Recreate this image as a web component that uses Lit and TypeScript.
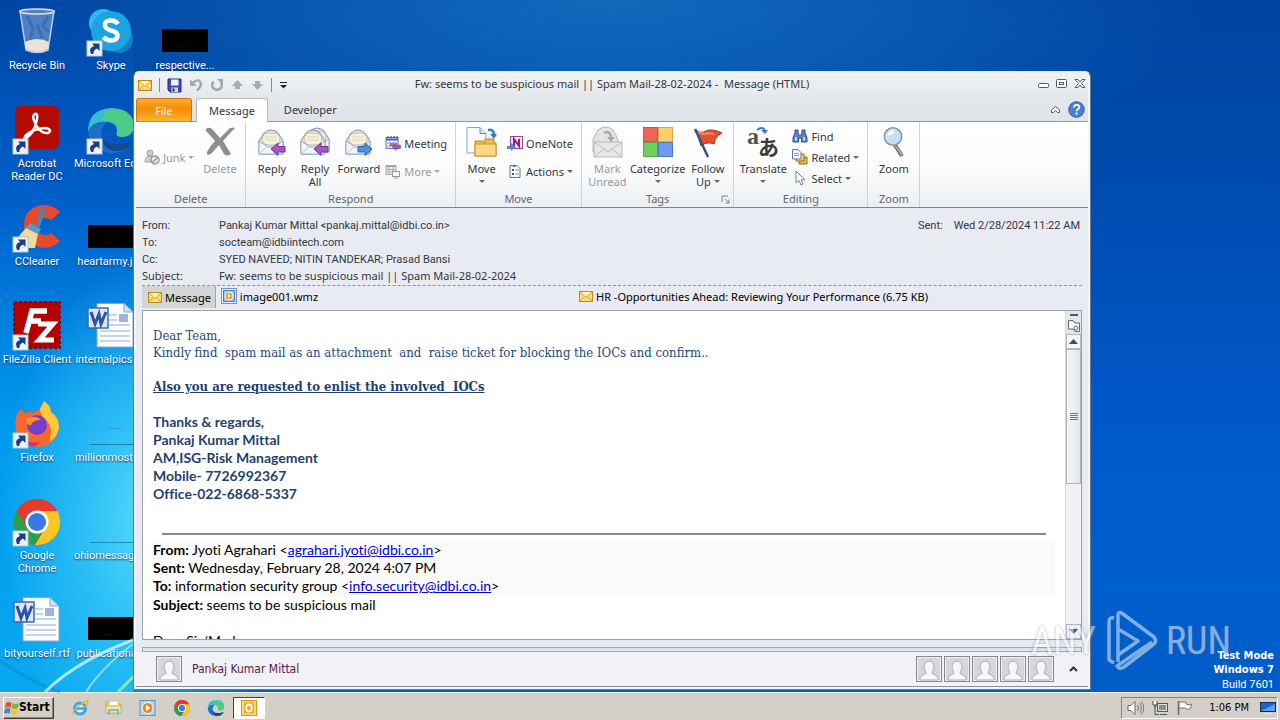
import { LitElement, html, svg, css, nothing, type TemplateResult } from "lit";
import { customElement } from "lit/decorators.js";

type Drawing = TemplateResult;

const box = (w: number, h: number, body: unknown, cls = "", vb = `0 0 ${w} ${h}`): Drawing =>
  html`<svg class=${cls} width=${w} height=${h} viewBox=${vb} aria-hidden="true">${body}</svg>`;

/* ---------- shared icon parts ---------- */

const mailOpen = (x = 0, y = 0) => svg`<g transform="translate(${x} ${y})">
  <path d="M1 12 6 4Q13-2 20 4L25 12V25H1Z" fill="#dfe8f2" stroke="#7b8fa8"/>
  <rect x="4" y="4" width="18" height="12" rx="6" fill="#f6f1dc" stroke="#c4bb9c"/>
  <path d="M7 8h12M7 11h12" stroke="#ddd4b4"/>
  <path d="M1 12 10 18H16L25 12V25H1Z" fill="#f1f6fb" stroke="#9aabc0"/>
  <path d="M1 25 10 17M25 25 16 17" stroke="#b6c4d3" fill="none"/></g>`;
const arrowLeft = (x: number, y: number, s = 1) =>
  svg`<path transform="translate(${x} ${y}) scale(${s})" d="M0 6 7 0V3.500H14V9H7V12.500Z" fill="#a556c4" stroke="#7c3199"/>`;
const arrowRight = (x: number, y: number) =>
  svg`<path transform="translate(${x} ${y})" d="M14 6 7 0V3.500H0V9H7V12.500Z" fill="#4f90dd" stroke="#2a62ac"/>`;

const icon = {
  mail: () => box(14, 12, svg`<rect x=".5" y="1.500" width="13" height="10" fill="#fbdf72" stroke="#b98a1d"/>
    <path d="M1 2 7 7.500 13 2M1 11 5.500 6.500M13 11 8.500 6.500" fill="none" stroke="#d3a436"/>
    <path d="M2 2H12L7 6.500Z" fill="#fff6c8"/>`),
  save: () => box(15, 15, svg`<path d="M1 1H14V14H3L1 12Z" fill="#3f49b4" stroke="#252c80"/>
    <rect x="4" y="1.500" width="7.500" height="6" fill="#f1f4ff"/><rect x="4.500" y="9.500" width="6.500" height="4.500" fill="#d5daf4"/>
    <rect x="5.500" y="10.500" width="2" height="3" fill="#252c80"/>`),
  undo: () => box(14, 14, svg`<path d="M4 5Q9 0 11.500 4.500 13 8 8 12.500" fill="none" stroke="#a3a7ac" stroke-width="2.500"/><path d="M1 1.500V8H8Z" fill="#a3a7ac"/>`),
  redo: () => box(14, 14, svg`<path d="M3.500 3.500Q1 6.500 3 10 7 13.500 11 10 12.500 7 11 3" fill="none" stroke="#a3a7ac" stroke-width="2.500"/><path d="M7 1H13V7Z" fill="#a3a7ac"/>`),
  up: () => box(13, 12, svg`<path d="M6.500 1 12 7H9V10H4V7H1Z" fill="#a9adb2"/>`),
  down: () => box(13, 12, svg`<path d="M6.500 11 12 5H9V2H4V5H1Z" fill="#a9adb2"/>`),
  customize: () => box(9, 8, svg`<path d="M1 1.500H8" stroke="#222"/><path d="M1 4H8L4.500 7.500Z" fill="#222"/>`),
  minimize: () => box(12, 12, svg`<rect x=".5" y="5.500" width="10" height="4" rx="1" fill="#fff" stroke="#555b63"/>`),
  restore: () => box(12, 12, svg`<rect x=".5" y="1.500" width="10" height="8" rx="1" fill="#fff" stroke="#555b63"/><rect x="3.500" y="4.500" width="4" height="2" fill="none" stroke="#555b63"/>`),
  close: () => box(12, 12, svg`<path d="M1 1.500H4L6 4 8 1.500H11L7.500 5.500 11 9.500H8L6 7 4 9.500H1L4.500 5.500Z" fill="#fff" stroke="#555b63"/>`),
  collapse: () => box(11, 9, svg`<path d="M1.500 5 5.500 1.500 9.500 5V7.500H7.500L5.500 5.500 3.500 7.500H1.500Z" fill="#fff" stroke="#555b63"/>`),
  help: () => box(17, 17, svg`<circle cx="8.500" cy="8.500" r="7.800" fill="#4a7fc9" stroke="#3364a8"/>
    <path d="M5.800 6.500Q6 3.800 8.700 3.800T11.300 6.200Q11.200 7.600 9.600 8.400 8.600 9 8.600 10.200" fill="none" stroke="#fff" stroke-width="1.800"/><circle cx="8.600" cy="12.600" r="1.200" fill="#fff"/>`),
  junk: () => box(16, 16, svg`<circle cx="6" cy="4" r="3" fill="#c9c9c9" stroke="#a0a0a0"/>
    <path d="M1 13Q1 7 6 7T11 13Z" fill="#cfcfcf" stroke="#a0a0a0"/><circle cx="11" cy="11" r="4" fill="#e6e6e6" stroke="#969696" stroke-width="1.500"/><path d="M8 14 14 8" stroke="#969696" stroke-width="1.500"/>`),
  remove: () => box(32, 32, svg`<path d="M2 3Q6 0 9 4L16 12 26 2Q30 1 31 2 24 9 19 15L27 28Q22 31 20 28L15 19 7 28Q2 30 3 26 6 20 11 15L4 7Q1 5 2 3Z" fill="#8e8e8e"/>`),
  reply: () => box(32, 32, svg`${mailOpen(2, 3)}${arrowLeft(15, 17)}`),
  replyAll: () => box(32, 32, svg`${mailOpen(5, 1)}${mailOpen(1, 3)}${arrowLeft(15, 17)}`),
  forward: () => box(32, 32, svg`${mailOpen(2, 3)}${arrowRight(15, 17)}`),
  meeting: () => box(16, 16, svg`<rect x="1" y="2.500" width="12" height="11" fill="#fff" stroke="#5b74b8"/><path d="M1 4.500H13" stroke="#4059ac" stroke-width="2"/>
    <path d="M3 1V3M6 1V3M9 1V3M12 1V3" stroke="#27366e"/><path d="M1 8H13M1 11H13M5 6V13M9 6V13" stroke="#8ba0d6"/><rect x="5" y="8" width="4" height="3" fill="#e15b52"/>${arrowLeft(7, 8, 0.6)}`),
  more: () => box(16, 16, svg`<rect x="1" y="2.500" width="10" height="9" fill="#eee" stroke="#aaa"/><path d="M1 3.500H11M1 6.500H11M1 9H11M4 3V11M8 3V11" stroke="#aaa"/><rect x="7.500" y="8.500" width="7" height="5" fill="#f4f4f4" stroke="#999"/><path d="M9 16 12 13.500V16" stroke="#999" fill="none"/>`),
  move: () => box(32, 32, svg`<path d="M1 1.500H14L20 7.500V27H1Z" fill="#f8fbff" stroke="#8da3c0"/><path d="M14 1.500V7.500H20" fill="#dce6f3" stroke="#6b83a5"/>
    <path d="M22 4Q28 3 28 9" fill="none" stroke="#3c78d0" stroke-width="2.500"/><path d="M24 8H31L28 13Z" fill="#3c78d0"/>
    <path d="M9 15H17L19 17V13H28V17H30V30H9Z" fill="#f2bd50" stroke="#b98529"/><path d="M9 18H30V30H9Z" fill="#fbd980" stroke="#c8943a"/>`),
  oneNote: () => box(16, 16, svg`<rect x="3.500" y="1.500" width="12" height="12" fill="#f6e6f4" stroke="#a04595"/><path d="M7 11V4L12 11V4" fill="none" stroke="#8b2380" stroke-width="2"/><path d="M0 11H4V8L9 12 4 16V14H0Z" fill="#4f87d6"/>`),
  actions: () => box(16, 16, svg`<path d="M3 2.500H10L13 5.500V14.500H3Z" fill="#f5f8fc" stroke="#63788f"/><rect x="5" y="6" width="2" height="2" fill="#44597a"/><rect x="5" y="10" width="2" height="2" fill="#44597a"/><path d="M8.500 7H11.500M8.500 11H11.500M6 3.500H9" stroke="#7488a6"/>`),
  unread: () => box(32, 32, svg`<path d="M2 13 7 4Q15-2 22 4L27 13V26H2Z" fill="#e4e2e3" stroke="#b9b5b7"/><path d="M13 7Q19 4 20 11" fill="none" stroke="#a9a9a9" stroke-width="2.500"/><path d="M16 11H24L20 16Z" fill="#a9a9a9"/>
    <path d="M3 16H31V31H3Z" fill="#e9e7e8" stroke="#b9b5b7"/><path d="M3 16 17 26 31 16M3 31 13 23M31 31 21 23" fill="none" stroke="#bbb"/>`),
  categorize: () => box(32, 32, svg`<rect x="1.500" y="1.500" width="14" height="14" fill="#f0635c" stroke="#d54f48"/><rect x="16.500" y="1.500" width="14" height="14" fill="#fbd06b" stroke="#dba93f"/>
    <rect x="1.500" y="16.500" width="14" height="14" fill="#6fcf5d" stroke="#4fae45"/><rect x="16.500" y="16.500" width="14" height="14" fill="#6d9bea" stroke="#4c78cc"/>`),
  flag: () => box(32, 32, svg`<path d="M4 4Q9 8 14 5T30 7Q23 10 22 18 15 15 9 20Z" fill="#e5502f" stroke="#a93316"/><path d="M6 6Q12 9 16 7L22 8" stroke="#f58f6c" fill="none" stroke-width="2"/><path d="M3 3 16 31" stroke="#35557e" stroke-width="2.500"/>`),
  translate: () => box(32, 32, svg`<text x="0" y="18" font-family="Liberation Serif" font-weight="700" font-size="24" fill="#4f4f4f">a</text>
    <text x="11" y="29" font-family="Noto Sans CJK JP" font-weight="700" font-size="21" fill="#3b3b3b">あ</text>
    <path d="M10 4Q15 0 18 4" fill="none" stroke="#3c78d0" stroke-width="2"/><path d="M14 4H21L18 8Z" fill="#3c78d0"/>`),
  find: () => box(16, 16, svg`<path d="M3 2H6V5L7.500 8H8.500L10 5V2H13V5L15 10V14H9.500V10H6.500V14H1V10L3 5Z" fill="#5e86c8" stroke="#24468a"/><path d="M3 11H5M11 11H13" stroke="#d4e3fa" stroke-width="3"/>`),
  related: () => box(16, 16, svg`<path d="M7 8H15V15H7Z" fill="#f4b83f" stroke="#9a6a12"/><path d="M4 5H12V12H4Z" fill="#fbd578" stroke="#9a6a12"/><path d="M.500 .5H6L9 3.500V10H.500Z" fill="#f3f7fd" stroke="#5d78a4"/><path d="M2 4.500H7M2 6.500H7" stroke="#8ba2c8"/>`),
  select: () => box(16, 16, svg`<path d="M4 1V13L7 10.500 9 15 11 14 9 9.800H13Z" fill="#fff" stroke="#6b7f9d"/>`),
  zoom: () => box(32, 32, svg`<path d="M17 19 24 30" stroke="#6b6b6b" stroke-width="4"/><path d="M17 19 24 29" stroke="#b5b5b5" stroke-width="1.500"/><circle cx="15" cy="10.500" r="8.700" fill="#c5dff7" stroke="#8394a8" stroke-width="1.500"/><path d="M9 10Q10 4 16 4 18 8 9 10Z" fill="#f3faff"/>`),
  media: () => box(16, 16, svg`<rect x=".5" y=".5" width="15" height="15" fill="#eaf2fb" stroke="#6b95c9"/><rect x="2.500" y="2.500" width="11" height="11" fill="#9bc2ea" stroke="#4a7dba"/><circle cx="8" cy="8" r="4" fill="#f49a34" stroke="#fff"/><path d="M7 6 10 8 7 10Z" fill="#fff"/>`),
  launcher: () => box(9, 9, svg`<path d="M1 7V1H7M4 4 8 8M8 4.500V8H4.500" fill="none" stroke="#7c838c"/>`),
  person: () => box(26, 26, svg`<rect x=".5" y=".5" width="25" height="25" fill="#d5d6d9" stroke="#84878c"/><rect x="1.500" y="1.500" width="23" height="23" fill="none" stroke="#eff0f1"/>
    <path d="M4 24Q3 20 10 17.500 10 16 9 14.500 7 10 9 7 13 3 17 7 19 10 17 14.500 16 16 16 17.500 23 20 22 24Z" fill="#f7f7f8" stroke="#aeb0b4"/>`),
};

const shortcut = svg`<rect x="0" y="33" width="15" height="15" fill="#eef3f8" stroke="#b9c6d3"/><path d="M4 46Q1 40 7 38L5 35.500H12.500V43L10 40.500Q6 42 6.500 46Z" fill="#173f86"/>`;
const tile = (body: unknown, linked = true) => box(48, 48, svg`${body}${linked ? shortcut : nothing}`, "pic");

const wordDoc = tile(svg`<path d="M10 1.500H37L46 10V45H10Z" fill="#fbfdff" stroke="#8aa3cf"/><path d="M37 1.500V10H46Z" fill="#d4e0f3" stroke="#8aa3cf"/>
  <path d="M22 13H30M22 18H30M22 23H43M13 29H43M13 34H43M13 39H43" stroke="#8fa9d8"/><rect x="32" y="12" width="9" height="8" fill="#9db4de"/>
  <rect x="1" y="6" width="20" height="20" fill="#dce7f8" stroke="#4265b0" stroke-width="1.500"/><path d="M4 10 8 22 12 12 14 22 19 10" fill="none" stroke="#2d51a3" stroke-width="3"/>`, false);
const blackBox = tile(svg`<rect x="1" y="21" width="46" height="23" fill="#000"/><path d="M16 38.500H24" stroke="#2a0606"/>`, false);
const faintLine = tile(svg`<path d="M3 44.500H48" stroke="#1d7fa6"/><path d="M21 28.500H34" stroke="#2da2c9"/>`, false);
const edgePaths = svg`<path d="M1 26Q1 3 25 2 46 3 47 20 46 31 34 31 28 30 30 26 31 18 22 16 6 16 1 26Z" fill="#34bfd0"/>
  <path d="M20 4Q44 0 47 20 46 31 34 31 28 30 30 26 31 14 14 14Z" fill="#55d06e" opacity=".75"/>
  <path d="M1 26Q5 14 20 16 13 22 15 31 19 41 30 42 40 42 45 36 39 48 24 47 4 45 1 26Z" fill="#1d6fc4"/>
  <path d="M15 29Q16 38 28 38 38 39 44 35 46 35 44 38 38 46 27 45 14 42 15 29Z" fill="#134a94"/>`;
const chromePaths = svg`<circle cx="24" cy="24" r="23" fill="#e33b2e"/><path d="M4 12.500A23 23 0 0 0 22 47L32 29 14 29Z" fill="#2c9f4b"/><path d="M44 12.500A23 23 0 0 1 22 47L33 29 24 13Z" fill="#fbc624"/><path d="M4 12.500 14 29 24 13H44A23 23 0 0 0 4 12.500Z" fill="#e33b2e"/>
  <circle cx="24" cy="24" r="11.500" fill="#fff"/><circle cx="24" cy="24" r="9" fill="#3b78e7"/>`;

const shortcuts: { name: string; art: Drawing }[] = [
  { name: "Recycle Bin", art: tile(svg`<path d="M7 3 13 42Q24 47 35 42L41 3Z" fill="#7fa6d6" fill-opacity=".6" stroke="#b9cde8" stroke-width="1.500"/><path d="M12 34Q24 28 36 34L35 41Q24 47 13 41Z" fill="#e9e2d6"/>
    <path d="M14 8 20 20 17 32M35 8 30 18 36 24M24 16 29 30" fill="none" stroke="#2f5ea8" stroke-width="3" opacity=".55"/><ellipse cx="24" cy="3.500" rx="17" ry="2.500" fill="#5b7fb3" stroke="#d6dde8" stroke-width="1.500"/>`, false) },
  { name: "Acrobat Reader DC", art: tile(svg`<rect x="2" y="0" width="44" height="43" rx="6" fill="#b30b00"/><path d="M11 33Q21 29 24 13 25 7 22 8 18 10 23 19 28 28 35 27 40 24 33 22 22 22 13 29 10 33 13 33" fill="none" stroke="#fff" stroke-width="2.500"/>`) },
  { name: "CCleaner", art: tile(svg`<path d="M47 8Q40 0 29 1 11 4 11 22 12 41 30 44 41 44 47 37L38 29Q33 33 28 30 23 26 25 19 30 11 38 16Z" fill="#e6492d"/><path d="M30 4 25 23" stroke="#3b8cc4" stroke-width="4"/><path d="M17 19 28 25 25 30 13 24Z" fill="#4c9fd0"/><path d="M13 24 25 30 22 44H3Q-1 39 13 24Z" fill="#f3d8a0"/>`) },
  { name: "FileZilla Client", art: tile(svg`<rect x="1" y="0" width="46" height="46" fill="#b50000" stroke="#8b0000" stroke-width="2" stroke-dasharray="3 2"/><path d="M13 31 19 9H34M17 19H28" fill="none" stroke="#fff" stroke-width="5.500"/><path d="M25 22H40L26 38H41" fill="none" stroke="#fff" stroke-width="5"/>`) },
  { name: "Firefox", art: tile(svg`<path d="M2 22Q3 12 9 9L12 14Q16 10 20 13L27 9 31 1Q38 6 38 12 46 17 46 28 43 46 24 47 3 45 2 22Z" fill="#f9662f"/><path d="M31 1Q38 6 38 12 46 17 46 28 44 38 36 42 41 28 33 20 27 15 27 9Z" fill="#fdc83c"/><path d="M5 33Q12 45 27 42 22 50 11 43Z" fill="#e3286a"/><circle cx="24" cy="25" r="10" fill="#7340c9"/><path d="M13 19Q22 14 28 20 20 20 18 25 13 26 13 19Z" fill="#ff8b33"/>`) },
  { name: "Google Chrome", art: tile(chromePaths) },
  { name: "bityourself.rtf", art: wordDoc },
  { name: "Skype", art: tile(svg`<circle cx="16" cy="15" r="14" fill="#32b8ee"/><circle cx="32" cy="31" r="14" fill="#1480c8"/><circle cx="24" cy="23" r="20" fill="#1ba3e2"/><path d="M31 16Q28 12 23 12.500 17 13 18 17.500 18.500 21 24 22.500 31 24 30.500 28.500 29 33 23 32.500 19 32 16.500 29" fill="none" stroke="#fff" stroke-width="4.500"/>`) },
  { name: "Microsoft Edge", art: tile(edgePaths) },
  { name: "heartarmy.jpg", art: blackBox },
  { name: "internalpics.rtf", art: wordDoc },
  { name: "millionmost.rtf", art: faintLine },
  { name: "ohiomessage.rtf", art: tile(svg`<path d="M3 44.500H48" stroke="#1d8fb6"/>`, false) },
  { name: "publicationa...", art: blackBox },
  { name: "respective...", art: blackBox },
];

const caret = html`<i class="caret"></i>`;
const big = (art: Drawing, label: string, o: { off?: boolean; drop?: boolean; second?: string; w?: string } = {}) =>
  html`<button class="big ${o.w ?? ""}" ?disabled=${o.off ?? false}>${art}<span>${label}</span>
    ${o.second || o.drop ? html`<span class="second">${o.second ?? nothing}${o.drop ? caret : nothing}</span>` : nothing}</button>`;
const small = (art: Drawing, label: string, o: { off?: boolean; drop?: boolean } = {}) =>
  html`<button class="small" ?disabled=${o.off ?? false}>${art}<span>${label}</span>${o.drop ? caret : nothing}</button>`;
const group = (name: string, body: unknown, corner: unknown = nothing) =>
  html`<section class="group"><div class="tools">${body}</div><footer><span>${name}</span>${corner}</footer></section>`;

const taskIcons = {
  start: box(15, 16, svg`<path d="M2 3Q5 1 7.500 3L6.500 8Q4 6 1 8Z" fill="#e5532d"/><path d="M8.500 3Q11 5 15 3L14 8Q10 10 7.500 8Z" fill="#7cb93c"/><path d="M1 9Q4 7 6.500 9L5.500 14Q3 12 0 14Z" fill="#3f86d8"/><path d="M7.500 9.500Q10 11 14 9L13 14Q9 16 6.500 14Z" fill="#f7c12e"/>`),
  ie: box(18, 18, svg`<circle cx="9" cy="9.500" r="5.500" fill="#d9f1fd" stroke="#3ba7e4" stroke-width="3"/><path d="M5 9.500H14" stroke="#3ba7e4" stroke-width="2.500"/><path d="M2 16Q0 12 9 6T17 2Q17 5 14 8" fill="none" stroke="#e8b92f" stroke-width="1.500"/>`),
  files: box(18, 18, svg`<path d="M1 3H7L9 5H16V14H1Z" fill="#f4d679" stroke="#cba544"/><rect x="4" y="2" width="9" height="5" fill="#fff" stroke="#b9c9a0"/><path d="M1 7H16V14H1Z" fill="#fbe79f" stroke="#d6b455"/><path d="M4 16V11H13V16" fill="none" stroke="#7bb7e3" stroke-width="2"/>`),
  player: box(18, 18, svg`<rect x="1" y="1.500" width="15" height="15" fill="#b5d5f3" stroke="#5a93cf"/><circle cx="8.500" cy="9" r="5.500" fill="#f58321" stroke="#fff"/><path d="M7 6 11.500 9 7 12Z" fill="#fff"/>`),
  chrome: box(18, 18, chromePaths, "", "-2 -2 52 52"),
  edge: box(18, 18, edgePaths, "", "-1 -1 50 50"),
  outlook: box(18, 18, svg`<rect x="1.500" y="1.500" width="15" height="15" fill="#fbd978" stroke="#d69a1f"/><rect x="4" y="3.500" width="10" height="11" fill="#f0aa1c"/><ellipse cx="9" cy="9" rx="2.800" ry="3.500" fill="none" stroke="#fff" stroke-width="1.800"/>`),
  sound: box(18, 16, svg`<path d="M1 5.500H4L8 1.500V14.500L4 10.500H1Z" fill="#fff" stroke="#666"/><path d="M10.500 5Q12.500 8 10.500 11M12.500 3Q16 8 12.500 13M14.500 1.500Q19 8 14.500 14.500" fill="none" stroke="#777"/>`),
  network: box(17, 16, svg`<rect x="5.500" y="3.500" width="10" height="8" fill="#e2e2e2" stroke="#555"/><rect x="7" y="5" width="7" height="5" fill="#8b8b8b"/><path d="M8 14.500H15M3 6V14.500H7" stroke="#555" fill="none"/><path d="M1 1V5H5V1M3 5V8" stroke="#444" fill="#fff"/>`),
  flag: box(18, 16, svg`<path d="M2.500 1V15" stroke="#666" stroke-width="1.500"/><path d="M3 2H10V4Q13 6 16 4L14 9Q11 10 9 8H3Z" fill="#fff" stroke="#777"/>`),
  desktop: box(16, 14, svg`<rect x=".5" y="1.500" width="15" height="9" fill="#1f63c8" stroke="#0d2c66"/><path d="M1 10 15 3V10Z" fill="#5ba0ee"/><path d="M4 12.500H12" stroke="#dbe6f2"/>`),
};

@customElement("app-root")
export class AppRoot extends LitElement {
  static styles = css`
    :host {
      --ui: "DejaVu Sans Condensed", "DejaVu Sans", sans-serif;
      --label: Roboto, "Noto Sans", sans-serif;
      --office: "Noto Sans", "Open Sans", sans-serif;
      --line: #8f969f;
      display: flex;
      flex-direction: column;
      height: 100vh;
      overflow: hidden;
      font: 11px/13px var(--office);
      color: #33373d;
    }
    * { box-sizing: border-box; }
    button { font: inherit; color: inherit; background: none; border: 0; padding: 0; display: flex; align-items: center; cursor: default; }
    svg { display: block; flex: none; overflow: visible; }
    .desk {
      flex: 1;
      min-height: 0;
      position: relative;
      background:
        radial-gradient(ellipse 150px 260px at 150px 520px, rgba(95, 225, 252, .9) 0, rgba(70, 210, 250, .6) 45%, rgba(20, 150, 235, 0) 100%),
        linear-gradient(180deg, rgba(0, 110, 220, 0) 0, rgba(0, 110, 220, .6) 30%, rgba(0, 158, 240, .95) 62%, #08a8ef 100%) 0 0 / 133px 100% no-repeat,
        radial-gradient(ellipse 600px 190px at 610px 0, rgba(20, 112, 192, .85) 0, rgba(16, 105, 190, .6) 45%, rgba(10, 90, 180, 0) 100%),
        linear-gradient(180deg, #0044a0 0, #004bae 25%, #0058c8 60%, #005fcf 85%, #005cc6 100%);
    }
    .icons {
      display: grid;
      grid-auto-flow: column;
      grid-template-rows: repeat(7, 98px);
      grid-auto-columns: 74px;
      justify-content: start;
      padding-top: 8px;
      color: #fff;
      font: 11px/13px var(--label);
      text-shadow: 0 1px 2px #00306c;
    }
    .shortcut { display: flex; flex-direction: column; align-items: center; gap: 3px; text-align: center; color: inherit; text-decoration: none; }
    .shortcut span { max-width: 74px; padding: 0 2px; }
    .shortcut .nowrap { white-space: nowrap; padding: 0; }
    .streaks { position: absolute; left: 0; bottom: 0; }

    .window {
      position: absolute;
      inset: 71px 189px 2px 133px;
      display: flex;
      flex-direction: column;
      padding: 0 2px 2px;
      border: 1px solid #66788f;
      border-top-color: #e9eef5;
      border-radius: 6px 6px 0 0;
      background: #f3f5f8;
    }
    .title { display: flex; align-items: center; height: 26px; padding: 0 2px; border-radius: 6px 6px 0 0; background: linear-gradient(#f1f2f4, #e5e8eb); }
    .quick, .controls { display: flex; align-items: center; gap: 8px; flex: 1; }
    .quick { gap: 7px; }
    .quick i { width: 1px; height: 14px; background: #85898e; }
    .controls { justify-content: flex-end; gap: 6px; padding-bottom: 3px; }
    .caption { font: 11px/14px var(--office); margin: 0; padding-bottom: 2px; white-space: pre; font-weight: 400; }
    .tabs { display: flex; align-items: stretch; gap: 4px; height: 24px; background: linear-gradient(#e5e8eb, #dfe2e6); border-bottom: 1px solid var(--line); }
    .tabs button { justify-content: center; padding: 0 12px; border-radius: 3px 3px 0 0; font-size: 11px; }
    .tabs .file { width: 56px; color: #fff; background: linear-gradient(#fcae2e, #f58a05 45%, #fdb52a); border: 1px solid #c6751b; border-bottom: 0; }
    .tabs .active { background: #fff; border: 1px solid #b4b9c0; border-bottom: 0; margin-bottom: -1px; }
    .tabs .help { margin-left: auto; padding: 0 3px; gap: 7px; }
    .ribbon { display: flex; height: 86px; background: linear-gradient(#fff 0, #fdfdfe 50%, #eceff2 100%); border-bottom: 1px solid #7f858d; }
    .group { display: flex; flex-direction: column; border-right: 1px solid #cfd3d8; }
    .tools { flex: 1; display: flex; padding: 2px 4px 0; }
    .group footer { display: flex; justify-content: center; height: 15px; color: #5f6670; position: relative; }
    .group footer svg { position: absolute; right: 3px; top: 3px; }
    .big { flex-direction: column; min-width: 43px; padding: 2px 1px 0; gap: 0; }
    .big.wide { min-width: 50px; }
    .big > svg { margin-bottom: 4px; }
    .big .second { display: flex; align-items: center; gap: 3px; min-height: 13px; }
    .stack { display: flex; flex-direction: column; justify-content: space-evenly; padding: 0 4px; height: 66px; }
    .small { gap: 3px; height: 18px; }
    .caret { width: 0; height: 0; border: 3px solid transparent; border-top-color: #666; border-bottom: 0; }
    button:disabled { color: #979a9e; }
    button:disabled .caret { border-top-color: #aaa; }

    .message { flex: 1; min-height: 0; display: flex; flex-direction: column; padding: 9px 6px 0; background: #e8ebf1; }
    .head { display: grid; grid-template-columns: 77px 1fr auto; grid-auto-rows: 17px; line-height: 17px; margin: 0; padding: 0 2px 0 0; font-family: var(--label); border-bottom: 1px dashed #8d929a; }
    .head dt, .head dd { margin: 0; }
    .head .sent { grid-column: 3; grid-row: 1; display: flex; gap: 11px; }
    .head .subject { font-family: var(--office); line-height: 16px; }
    .files { display: grid; grid-template-columns: auto 1fr 503px; height: 22px; color: #000; }
    .files button { gap: 3px; padding-bottom: 2px; }
    .files .on { background: #d3d6d4; border-right: 1px solid #9ea3a6; padding: 0 4px 0 6px; margin-right: 5px; }
    .page { flex: 1; min-height: 0; display: flex; margin-top: 2px; background: #fff; border: 1px solid #9aa1ad; }
    .body { flex: 1; min-width: 0; overflow: hidden; padding: 16px 10px 0; font: 14px/18px Lato, "Open Sans", sans-serif; font-variant-ligatures: none; color: #000; }
    .body p { margin: 0; }
    .body .note { font: 13px/17px "DejaVu Serif Condensed", "DejaVu Serif", serif; color: #1f497d; white-space: pre-wrap; }
    .body .ask { margin-top: 17px; font-weight: 700; text-decoration: underline; color: #1f416e; }
    .body .sign { margin-top: 18px; font-weight: 700; color: #1f416e; }
    .body hr { margin: 30px 9px 6px; border: 0; border-top: 2px solid #8a8a8a; }
    .quoted { background: #fafafa; padding-bottom: 1px; }
    .body .after { margin-top: 18px; }
    .body a { color: #0000d8; }
    .scroll { width: 16px; display: flex; flex-direction: column; background: #f1f1f3; border-left: 1px solid #d5d7db; }
    .scroll .split { height: 23px; background: #e2e5eb; display: grid; place-items: center; }
    .scroll button { height: 15px; justify-content: center; background: #f5f6f8; border: 1px solid #b4b9c2; }
    .scroll .thumb { height: 135px; display: grid; place-items: center; background: linear-gradient(90deg, #f7f7f8, #e4e5e8); border: 1px solid #b0b4bc; }
    .scroll .rest { flex: 1; }
    .splitter { height: 5px; margin-top: 7px; border: 1px solid #a2a8b3; background: #dfe3ea; }
    .people { display: flex; align-items: center; gap: 2px; height: 35px; padding: 0 10px 0 20px; margin: 0; background: #f0f2f6; border-bottom: 1px solid #8b919b; }
    .people .name { font: 12px/15px var(--ui); color: #571a43; margin: 0 auto 0 8px; }
    .people .toggle { margin-left: 13px; }

    .mark { position: absolute; right: 49px; bottom: 20px; display: flex; align-items: center; gap: 8px; color: #fff; opacity: .5; font: 38px/62px "Liberation Sans Narrow", "Roboto Condensed", Roboto, sans-serif; text-shadow: 0 0 3px #667; pointer-events: none; }
    .build { position: absolute; right: 6px; bottom: 0; margin: 0; text-align: right; color: #fff; font: 11px/15px var(--label); }
    .build b { display: block; line-height: 14px; font-family: var(--ui); }

    .bar { display: flex; align-items: center; height: 28px; padding: 2px 2px 0 3px; background: #d4d0c8; border-top: 1px solid #f4f3f0; font-family: var(--ui); color: #000; }
    .start { height: 22px; width: 51px; gap: 0; font-weight: 700; font-size: 12px; border: 1px solid; border-color: #fff #404040 #404040 #fff; box-shadow: inset -1px -1px #87847e; }
    .tasks { display: flex; flex: 1; padding-left: 9px; }
    .tasks button { width: 34px; height: 22px; justify-content: center; }
    .tasks .on { width: 32px; background: #fff; border: 1px solid; border-color: #404040 #fff #fff #404040; }
    .tray { display: flex; align-items: center; gap: 7px; height: 22px; padding: 0 1px 0 5px; border: 1px solid; border-color: #87847e #fff #fff #87847e; }
    .tray time { margin: 0 4px 0 8px; }
  `;

  private renderRibbon() {
    return html`<div class="ribbon">
      ${group("Delete", html`<div class="stack">${small(icon.junk(), "Junk", { off: true, drop: true })}</div>${big(icon.remove(), "Delete", { off: true })}`)}
      ${group("Respond", html`${big(icon.reply(), "Reply")}${big(icon.replyAll(), "Reply", { second: "All" })}${big(icon.forward(), "Forward")}
        <div class="stack">${small(icon.meeting(), "Meeting")}${small(icon.more(), "More", { off: true, drop: true })}</div>`)}
      ${group("Move", html`${big(icon.move(), "Move", { drop: true })}
        <div class="stack">${small(icon.oneNote(), "OneNote")}${small(icon.actions(), "Actions", { drop: true })}</div>`)}
      ${group("Tags", html`${big(icon.unread(), "Mark", { second: "Unread", off: true })}${big(icon.categorize(), "Categorize", { drop: true })}${big(icon.flag(), "Follow", { second: "Up", drop: true })}`, icon.launcher())}
      ${group("Editing", html`${big(icon.translate(), "Translate", { drop: true, w: "wide" })}
        <div class="stack">${small(icon.find(), "Find")}${small(icon.related(), "Related", { drop: true })}${small(icon.select(), "Select", { drop: true })}</div>`)}
      ${group("Zoom", big(icon.zoom(), "Zoom"))}
    </div>`;
  }

  private renderMail() {
    return html`<article class="body">
      <p class="note">Dear Team,</p>
      <p class="note">Kindly find  spam mail as an attachment  and  raise ticket for blocking the IOCs and confirm..</p>
      <p class="note ask">Also you are requested to enlist the involved  IOCs</p>
      <p class="sign">Thanks &amp; regards,<br />Pankaj Kumar Mittal<br />AM,ISG-Risk Management<br />Mobile- 7726992367<br />Office-022-6868-5337</p>
      <hr />
      <div class="quoted">
        <p><b>From:</b> Jyoti Agrahari &lt;<a href="mailto:agrahari.jyoti@idbi.co.in">agrahari.jyoti@idbi.co.in</a>&gt;</p>
        <p><b>Sent:</b> Wednesday, February 28, 2024 4:07 PM</p>
        <p><b>To:</b> information security group &lt;<a href="mailto:info.security@idbi.co.in">info.security@idbi.co.in</a>&gt;</p>
      </div>
      <p><b>Subject:</b> seems to be suspicious mail</p>
      <p class="after">Dear Sir/Madam</p>
    </article>`;
  }

  private renderWindow() {
    const t = (dir: string) => box(9, 5, svg`<path d=${dir} fill="#454a57"/>`);
    return html`<main class="window">
      <header class="title">
        <div class="quick">${icon.mail()}<i></i>
          <button aria-label="Save">${icon.save()}</button><button aria-label="Undo">${icon.undo()}</button><button aria-label="Redo">${icon.redo()}</button>
          <button aria-label="Previous">${icon.up()}</button><button aria-label="Next">${icon.down()}</button><i></i><button aria-label="Customize">${icon.customize()}</button></div>
        <h1 class="caption">Fw: seems to be suspicious mail || Spam Mail-28-02-2024 -  Message (HTML)</h1>
        <div class="controls"><button aria-label="Minimize">${icon.minimize()}</button><button aria-label="Restore">${icon.restore()}</button><button aria-label="Close">${icon.close()}</button></div>
      </header>
      <nav class="tabs"><button class="file">File</button><button class="active">Message</button><button>Developer</button>
        <button class="help" aria-label="Help">${icon.collapse()}${icon.help()}</button></nav>
      ${this.renderRibbon()}
      <div class="message">
        <dl class="head">
          <dt>From:</dt><dd>Pankaj Kumar Mittal &lt;pankaj.mittal@idbi.co.in&gt;</dd><dd class="sent"><span>Sent:</span><span>Wed 2/28/2024 11:22 AM</span></dd>
          <dt>To:</dt><dd>socteam@idbiintech.com</dd><dd></dd>
          <dt>Cc:</dt><dd>SYED NAVEED; NITIN TANDEKAR; Prasad Bansi</dd><dd></dd>
          <dt class="subject">Subject:</dt><dd class="subject">Fw: seems to be suspicious mail || Spam Mail-28-02-2024</dd>
        </dl>
        <div class="files"><button class="on">${icon.mail()}Message</button><button>${icon.media()}image001.wmz</button><button>${icon.mail()}HR -Opportunities Ahead: Reviewing Your Performance (6.75 KB)</button></div>
        <div class="page">
          ${this.renderMail()}
          <div class="scroll">
            <div class="split">${box(14, 20, svg`<path d="M3 2H11" stroke="#555" stroke-width="2"/><path d="M1.500 7.500H6L8 10H12.500V18.500H8L6 16H1.500Z" fill="#fff" stroke="#666"/><circle cx="9" cy="15" r="2" fill="#fff" stroke="#666"/>`)}</div>
            <button aria-label="Scroll up">${t("M0 5 4.500 0 9 5Z")}</button>
            <div class="thumb">${box(8, 8, svg`<path d="M0 .5H8M0 2.500H8M0 4.500H8M0 6.500H8" stroke="#777"/>`)}</div>
            <div class="rest"></div>
            <button aria-label="Scroll down">${t("M0 0 4.500 5 9 0Z")}</button>
          </div>
        </div>
        <div class="splitter"></div>
      </div>
      <footer class="people">${icon.person()}<span class="name">Pankaj Kumar Mittal</span>
        ${[0, 1, 2, 3, 4].map(() => icon.person())}
        <button class="toggle" aria-label="Expand">${box(9, 6, svg`<path d="M1 5 4.500 1.500 8 5" fill="none" stroke="#333" stroke-width="2"/>`)}</button></footer>
    </main>`;
  }

  render() {
    return html`<div class="desk">
        <svg class="streaks" width="300" height="80" viewBox="0 0 300 80" aria-hidden="true" fill="none">
          <path d="M-10 40Q20 66 60 80" stroke="#0e7fd0" stroke-width="3" opacity=".4"/>
          <path d="M45 80Q80 45 150 22" stroke="#c9f6ff" stroke-width="3" opacity=".8"/><path d="M86 80Q105 50 150 20" stroke="#b6f3ff" stroke-width="2" opacity=".7"/><path d="M118 80 140 58" stroke="#a6f09a" stroke-width="3" opacity=".8"/>
        </svg>
        <div class="icons">${shortcuts.map((s) => html`<a class="shortcut" href="#">${s.art}<span class=${/Acrobat|Google/.test(s.name) ? "" : "nowrap"}>${s.name}</span></a>`)}</div>
        ${this.renderWindow()}
        <div class="mark"><span>ANY</span>${box(54, 62, svg`<path d="M10 8Q5 7 5 12V50L10 53M14 8V52M14 4Q15 1 19 4L50 27Q53 31 50 34L20 57Q15 60 13 56L48 32 M14 4V42M14 19 34 31 14 45" fill="none" stroke="#fff" stroke-width="3.500" stroke-linejoin="round"/>`)}<span>RUN</span></div>
        <p class="build"><b>Test Mode</b><b>Windows 7</b>Build 7601</p>
      </div>
      <div class="bar">
        <button class="start">${taskIcons.start}Start</button>
        <div class="tasks"><button aria-label="Internet Explorer">${taskIcons.ie}</button><button aria-label="Explorer">${taskIcons.files}</button><button aria-label="Media Player">${taskIcons.player}</button><button aria-label="Chrome">${taskIcons.chrome}</button><button aria-label="Edge">${taskIcons.edge}</button><button class="on" aria-label="Outlook">${taskIcons.outlook}</button></div>
        <div class="tray">${taskIcons.sound}${taskIcons.network}${taskIcons.flag}<time>1:06 PM</time>${taskIcons.desktop}</div>
      </div>`;
  }
}
